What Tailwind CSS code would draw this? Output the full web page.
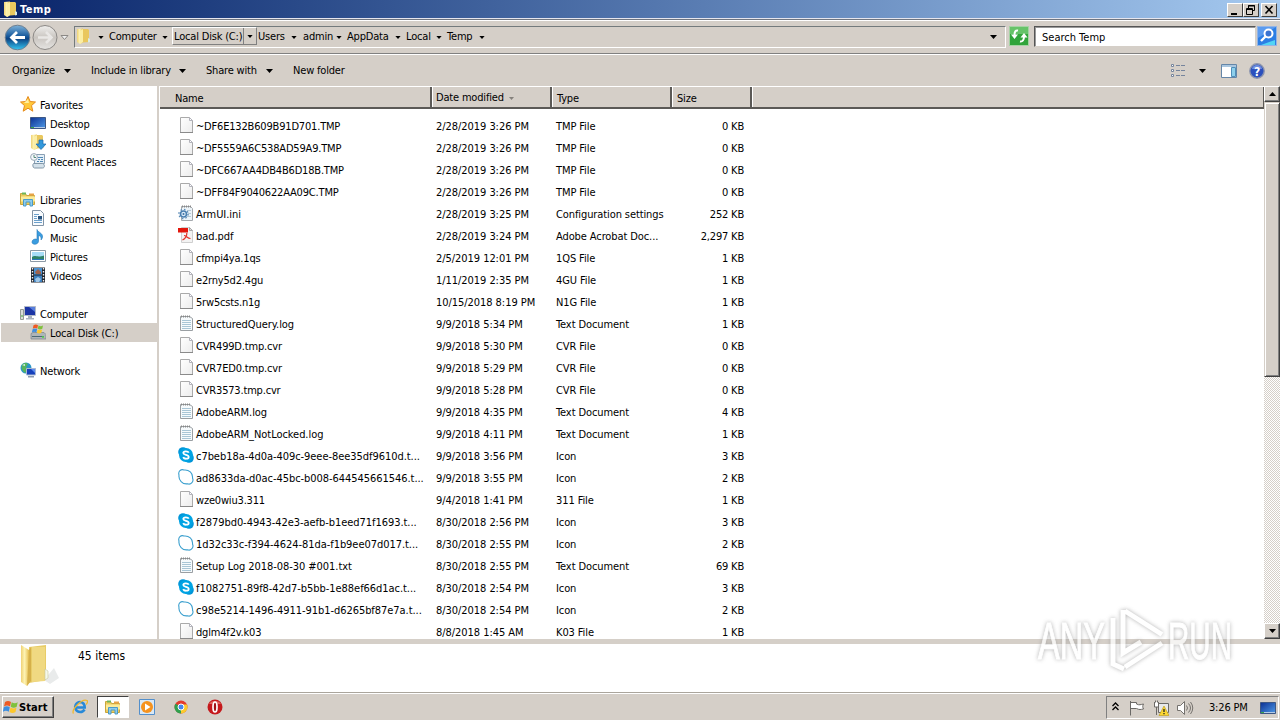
<!DOCTYPE html>
<html lang="en">
<head>
    <meta charset="UTF-8">
    <meta name="viewport" content="width=device-width, initial-scale=1.0">
    <title>Temp</title>
    <script src="https://cdn.jsdelivr.net/npm/@tailwindcss/browser@4"></script>
</head>
<body class="w-[1280px] h-[720px] overflow-hidden bg-[#d5cfc8] text-black text-[11px] leading-[14px] tracking-[-0.18px] font-['DejaVu_Sans_Condensed','DejaVu_Sans',sans-serif]">

    <!-- Shared icons -->
    <svg class="absolute w-0 h-0">
        <defs>
            <linearGradient id="gold" x1="0" x2="1"><stop offset="0" stop-color="#f0d274"/><stop offset=".45" stop-color="#fdf3b4"/><stop offset="1" stop-color="#e6bf50"/></linearGradient>
            <linearGradient id="paper" x1="0" y1="0" x2="1" y2="1"><stop offset="0" stop-color="#fff"/><stop offset="1" stop-color="#ececec"/></linearGradient>
            <linearGradient id="screen" x1="0" y1="0" x2="1" y2="1"><stop offset="0" stop-color="#0b2f92"/><stop offset="1" stop-color="#4f9be8"/></linearGradient>
            <linearGradient id="ball" x1="0" y1="0" x2="0" y2="1"><stop offset="0" stop-color="#7db2da"/><stop offset=".45" stop-color="#17599c"/><stop offset=".55" stop-color="#0c4383"/><stop offset="1" stop-color="#35c6f2"/></linearGradient>
            <linearGradient id="silver" x1="0" y1="0" x2="0" y2="1"><stop offset="0" stop-color="#f0efed"/><stop offset=".5" stop-color="#c9c5c0"/><stop offset="1" stop-color="#e6e4e2"/></linearGradient>
        </defs>
        <symbol id="folder" viewBox="0 0 16 16"><path d="M2 1l6-.5v14L5 16l-3-2z" fill="url(#gold)"/><path d="M8 1h5l1 1v12l-6 .5z" fill="#e9c75e"/><path d="M5 3l3-2v13l-3 2z" fill="#fbeea5"/><path d="M13 10l2 1v3l-2 .5z" fill="#dcebe0"/></symbol>
        <symbol id="file" viewBox="0 0 16 16"><path d="M2.500.5h9l3 3v12h-12z" fill="url(#paper)" stroke="#aaa"/><path d="M11.500.5v3h3z" fill="#fff" stroke="#b4b4bc"/><path d="M2 15.500h13" stroke="#8a8a8a"/></symbol>
        <symbol id="log" viewBox="0 0 16 16"><path d="M2.500 1.500h9l3 2v12h-12z" fill="#f6fafc" stroke="#9a9fa3"/><path d="M4 5.500h9M4 7.500h9M4 9.500h9M4 11.500h9M4 13.500h9" stroke="#a9c6d6"/><path d="M3 1.500h10" stroke="#888" stroke-width="2" stroke-dasharray="1 1"/></symbol>
        <symbol id="ini" viewBox="0 0 16 16"><path d="M3.500 1.500h9l2 2v12h-11z" fill="#edf4f9" stroke="#a5a9ad"/><path d="M4 1.500h9" stroke="#888" stroke-width="2" stroke-dasharray="1 1"/><path d="M9 5.500h4M10 8.500h3M9 11.500h4" stroke="#b5c8d6"/><circle cx="5.500" cy="9" r="3" fill="#dcecf8" stroke="#4b7fb0" stroke-width="1.600"/><circle cx="5.500" cy="9" r="4.600" fill="none" stroke="#5d8db8" stroke-width="1.400" stroke-dasharray="1.500 2.100"/><circle cx="5.500" cy="9" r="1" fill="#4272a1"/></symbol>
        <symbol id="pdf" viewBox="0 0 16 16"><path d="M3.500.5h8l3 3v12h-11z" fill="#f3f3f3" stroke="#cfcfcf"/><path d="M11.500.5v3h3z" fill="#ddd" stroke="#aaa"/><path d="M0 1h10v4.500H0z" fill="#e3170c"/><path d="M4.500 13c3-1.500 4.500-4 4.300-7M6 8.500c2 0 3.500 3 6.500 3" fill="none" stroke="#e23228" stroke-width="1.200"/></symbol>
        <symbol id="skype" viewBox="0 0 16 16"><circle cx="5" cy="5" r="4.800" fill="#0095d8"/><circle cx="11" cy="11" r="4.800" fill="#0095d8"/><circle cx="8" cy="8" r="7" fill="#00a3e3"/><path d="M10.800 5.700C9.800 3.800 5.300 3.800 5.300 6c0 2.300 5.400 1.300 5.400 3.900 0 2.400-4.700 2.400-5.500.2" fill="none" stroke="#fff" stroke-width="1.800"/></symbol>
        <symbol id="skypeo" viewBox="0 0 16 16"><path d="M1 6C-.2 2.500 3-.3 6 1c5-.5 9 3 8.500 8 1.700 3.500-1.500 7-5 5.800C4.500 15.500.3 11 1 6z" fill="#fff" stroke="#3a9fce" stroke-width="1.100"/></symbol>
        <symbol id="star" viewBox="0 0 16 16"><path d="M8 .5l2.200 5 5.300.5-4 3.600 1.300 5.600L8 12.200l-4.800 3 1.300-5.600L.5 6l5.300-.5z" fill="#ffc83a" stroke="#e58a1c"/><path d="M8 3l1 4-5 0z" fill="#fff0a0"/></symbol>
        <symbol id="desktop" viewBox="0 0 16 16"><path d="M.5 2.500h15v11H.5z" fill="url(#screen)" stroke="#3d5784"/><path d="M1 12.500h14" stroke="#b5cbe6"/><path d="M1 12.500h3" stroke="#3ba94a"/></symbol>
        <symbol id="downloads" viewBox="0 0 16 16"><use href="#folder" x="-1" width="16" height="16"/><path d="M9 6h4v4h3l-5 5.500L6 10h3z" fill="#3298dc" stroke="#1b69ab" stroke-width=".7"/></symbol>
        <symbol id="recent" viewBox="0 0 16 16"><path d="M4.500 1.500h10v9h-10z" fill="#e5f0f8" stroke="#8aa0b4"/><path d="M3.500 10.500h9c2 0 3 4.500 0 4.500h-8c-2 0-2-4-1-4.500z" fill="#d4e1ea" stroke="#8297a8"/><path d="M8 4.500h5M8 6.500h2M11 6.500h2M7 8.500h2M10 8.500h3" stroke="#5289b6"/><circle cx="4" cy="4" r="3.400" fill="#f5f8fb" stroke="#9aa8b5"/><path d="M4 2v2.500h2" fill="none" stroke="#587"/></symbol>
        <symbol id="lib" viewBox="0 0 16 16"><path d="M.5 2.500h5l1 2h8v9H.5z" fill="#edcb5c" stroke="#c9a63c"/><path d="M2 1.500h4v2H2z" fill="#6cb55c"/><path d="M9 2.500h5v2H9z" fill="#e8a345"/><path d="M1 5.500h14v5H1z" fill="#fbeb9a"/><path d="M3.500 15V8.500h9V15H10v-4H6v4z" fill="#8ecbec" stroke="#4b9bc8"/></symbol>
        <symbol id="doc" viewBox="0 0 16 16"><path d="M2.500.5h8l3 3v12h-11z" fill="#f8fbfe" stroke="#8294a6"/><path d="M4 4.500h5M4 6.500h3M4 8.500h3M4 10.500h8M4 12.500h8" stroke="#6ca0cc"/><path d="M8 6h4v3.500H8z" fill="#27537f"/></symbol>
        <symbol id="music" viewBox="0 0 16 16"><path d="M7 .5c1 3 6 3.500 5.500 7.500-.2 1.500-1 2.500-1.500 3 .5-3-.5-4-2.500-4.500V12c0 4-6.500 4.300-6.500 1 0-2.500 3-3.500 5-2.700z" fill="#3a9de0" stroke="#2478ba" stroke-width=".6"/></symbol>
        <symbol id="pic" viewBox="0 0 16 16"><path d="M.5 2.500h15v11H.5z" fill="#fff" stroke="#8d9aa6"/><path d="M2 4h12v8H2z" fill="#a7dcf6"/><path d="M2 9c3-2.500 5 1 12-1.500V12H2z" fill="#2f8268"/><path d="M2 11h12v1H2z" fill="#2b76bd"/></symbol>
        <symbol id="video" viewBox="0 0 16 16"><path d="M1 .5h14v15H1z" fill="#20242c"/><path d="M4 1h8v6.500H4z" fill="#4b94d4"/><path d="M4 8.500h8V15H4z" fill="#3c7fbe"/><path d="M5 5l3-3 3 3v2H6z" fill="#a0634d"/><path d="M5 12l3-2 3 2-2 3H6z" fill="#9fc7e8"/><path d="M2.500 1v14M13.500 1v14" stroke="#f2f2f2" stroke-width="1.400" stroke-dasharray="1.500 1.500"/></symbol>
        <symbol id="pc" viewBox="0 0 16 16"><path d="M.5 4.500h3v10h-3z" fill="#d9dcd8" stroke="#949b95"/><path d="M1 11h2" stroke="#45ad3b"/><path d="M4.500 1.500h11v9h-11z" fill="#1b35a5" stroke="#b3bac8"/><path d="M9 2h6v5z" fill="#577ede"/><path d="M8 11h4v2h2v1.500H6V13h2z" fill="#a9b2bf"/></symbol>
        <symbol id="flag" viewBox="0 0 16 16"><path d="M2 3c2-1.500 4-1.500 6 0L7 7.500c-2-1.300-4-1.300-6 0z" fill="#ee5a24"/><path d="M8.700 3.200c2 1.300 4 1.300 6 0l-1 4.500c-2 1.300-4 1.300-6 0z" fill="#7fc13c"/><path d="M.8 8.300c2-1.300 4-1.300 6 0l-1 4.500c-2-1.300-4-1.300-6 0z" fill="#3d8ee0"/><path d="M7.500 8.500c2 1.300 4 1.300 6 0l-1 4.500c-2 1.300-4 1.300-6 0z" fill="#fcc72c"/></symbol>
        <symbol id="disk" viewBox="0 0 16 16"><path d="M1 9.500l2-1h11l2 2V15H1z" fill="#aeb5b8" stroke="#788289" stroke-width=".7"/><path d="M2 12.500h12" stroke="#4d6873"/><path d="M12 13h2" stroke="#52d64a" stroke-width="1.500"/><use href="#flag" x="2" y="-1" width="12" height="12"/></symbol>
        <symbol id="net" viewBox="0 0 16 16"><circle cx="6" cy="6" r="5.500" fill="#2b96c9"/><path d="M2 3c2-3 5-2 6-1L6 5l2 2-3 4C2 9 1 6 2 3z" fill="#57b45e"/><path d="M2 3l3-1v2z" fill="#d6f2ef"/><path d="M6.500 6.500h9v6.500h-9z" fill="#1640bb" stroke="#aab8d2"/><path d="M11 7h4v4z" fill="#5b8cf0"/><path d="M8 14h6v1.500H8z" fill="#8c9bb0"/></symbol>
        <symbol id="down" viewBox="0 0 7 4"><path d="M0 0h7L3.500 4z"/></symbol>
    </svg>

    <div class="flex flex-col h-full">
        <!-- Title bar -->
        <header class="h-[18px] shrink-0 flex items-center pl-[2px] pr-[3px] bg-linear-to-r from-[#0a246a] to-[#a6caf0]">
            <svg class="w-4 h-4"><use href="#folder"/></svg>
            <span class="ml-[2px] mt-px text-white font-bold tracking-[0.5px]">Temp</span>
            <div class="ml-auto flex text-black pt-px">
                <div class="w-4 h-[14px] bg-[#d5cfc8] border border-t-white border-l-white border-b-[#404040] border-r-[#404040]"><svg class="w-[14px] h-3"><path d="M3 9h6v2H3z"/></svg></div>
                <div class="w-4 h-[14px] bg-[#d5cfc8] border border-t-white border-l-white border-b-[#404040] border-r-[#404040]"><svg class="w-[14px] h-3" fill="none" stroke="#000"><path d="M4.500 4V1.500h6v5H9M4 2h7M2.500 4.500h6v6h-6zM2 5.500h7"/></svg></div>
                <div class="ml-[2px] w-4 h-[14px] bg-[#d5cfc8] border border-t-white border-l-white border-b-[#404040] border-r-[#404040]"><svg class="w-[14px] h-3" stroke="#000" stroke-width="1.600"><path d="M3.500 2l7 7.500M10.500 2l-7 7.500"/></svg></div>
            </div>
        </header>

        <!-- Address bar -->
        <div class="h-[37px] shrink-0 flex items-start border-t border-t-[#e6e6ee] border-b border-b-white">
            <div class="w-full h-[35px] flex items-start border-t border-t-[#6f7580] border-b border-b-[#808080] pl-1 pr-[2px] shadow-[inset_0_1px_0_#fff]">
                <svg class="w-[68px] h-[32px] mt-px">
                    <circle cx="13.500" cy="16.500" r="12.300" fill="url(#ball)" stroke="#6e7f90"/>
                    <path d="M21 16.500H8M13 11l-5.500 5.500L13 22" fill="none" stroke="#fff" stroke-width="2.800"/>
                    <circle cx="41" cy="16.500" r="12" fill="url(#silver)" stroke="#8b8885"/>
                    <path d="M34 16.500h13M42 11l5.500 5.500L42 22" fill="none" stroke="#e9e7e5" stroke-width="2.600"/>
                    <path d="M57 14.500h7l-3.500 4z" fill="#eee" stroke="#8b8885"/>
                </svg>
                <div class="mt-[6px] ml-[2px] w-[932px] h-[22px] flex items-center border border-t-[#737a7c] border-l-[#737a7c] border-b-white border-r-white">
                    <svg class="w-4 h-4 -mt-[2px]"><use href="#folder"/></svg>
                    <svg class="w-[6px] h-[3px] ml-[7px] mr-[5px]"><use href="#down"/></svg>
                    <span class="w-[53px] whitespace-nowrap">Computer</span>
                    <svg class="w-[6px] h-[3px]"><use href="#down"/></svg>
                    <div class="ml-[4px] w-[85px] h-[18px] -mt-[2px] flex items-center border border-t-white border-l-white border-b-[#808080] border-r-[#808080]">
                        <span class="w-[71px] h-full pl-px pt-[2px] border-r border-r-[#808080] whitespace-nowrap">Local Disk (C:)</span>
                        <svg class="w-[6px] h-[3px] ml-[3px] mt-px"><use href="#down"/></svg>
                    </div>
                    <span class="ml-px w-[33px]">Users</span>
                    <svg class="w-[6px] h-[3px] mr-[6px]"><use href="#down"/></svg>
                    <span class="w-[33px]">admin</span>
                    <svg class="w-[6px] h-[3px] mr-[5px]"><use href="#down"/></svg>
                    <span class="w-[48px]">AppData</span>
                    <svg class="w-[6px] h-[3px] mr-[5px]"><use href="#down"/></svg>
                    <span class="w-[30px]">Local</span>
                    <svg class="w-[6px] h-[3px] mr-[5px]"><use href="#down"/></svg>
                    <span class="w-[32px]">Temp</span>
                    <svg class="w-[6px] h-[3px]"><use href="#down"/></svg>
                    <svg class="w-[7px] h-[4px] ml-auto mr-[8px]"><use href="#down"/></svg>
                </div>
                <svg class="w-[20px] h-[20px] mt-[6px] ml-[3px]">
                    <rect x=".5" y=".5" width="19" height="19" fill="#31a43b" stroke="#a5d3a4"/>
                    <path d="M1 1h18v7H1z" fill="#66c369"/>
                    <path d="M9 4.500C6.500 4 5.500 6 5.500 9M11 15.500c2.500.5 4-1.500 4-5" fill="none" stroke="#fff" stroke-width="2"/>
                    <path d="M2 8.500h7L5.500 13zM11.500 11.500h7L15 7z" fill="#fff"/>
                </svg>
                <div class="mt-[6px] ml-[5px] w-[222px] h-[21px] bg-white border border-t-[#555] border-l-[#555] border-r-[#d5cfc8] border-b-[#d5cfc8] shadow-[inset_1px_1px_0_#999] pl-[7px] pt-[4px] tracking-[0px]">Search Temp</div>
                <svg class="w-[20px] h-[21px] mt-[6px] ml-px">
                    <rect x=".5" y=".5" width="19" height="19" fill="#2c7ee4" stroke="#93b4e4"/>
                    <path d="M1 1h18L1 12z" fill="#5b9bef"/><path d="M4 19l14-5v5z" fill="#52d4f4"/>
                    <circle cx="11.500" cy="7.500" r="4" fill="#3b74d2" stroke="#fff" stroke-width="2"/><path d="M8.500 10.500L4 15" stroke="#fff" stroke-width="2.400"/>
                </svg>
            </div>
        </div>

        <!-- Command bar -->
        <div class="h-[31px] shrink-0 flex items-center pl-3 pr-[15px]">
            <span class="w-[52px]">Organize</span>
            <svg class="w-[7px] h-[4px]"><use href="#down"/></svg>
            <span class="ml-5 w-[88px] whitespace-nowrap">Include in library</span>
            <svg class="w-[7px] h-[4px]"><use href="#down"/></svg>
            <span class="ml-5 w-[60px] whitespace-nowrap">Share with</span>
            <svg class="w-[7px] h-[4px]"><use href="#down"/></svg>
            <span class="ml-5">New folder</span>
            <svg class="w-4 h-[14px] ml-auto" stroke="#75849c" fill="#fff"><path d="M1.500.5h2v2h-2zM1.500 5.500h2v2h-2zM1.500 10.500h2v2h-2z"/><path d="M6 1.500h4M11 1.500h4M6 6.500h4M11 6.500h4M6 11.500h4M11 11.500h4"/></svg>
            <svg class="w-[7px] h-[4px] ml-[13px]"><use href="#down"/></svg>
            <svg class="w-4 h-[14px] ml-[15px]"><path d="M.5.5h15v13H.5z" fill="#fff" stroke="#6486a8"/><path d="M1 1h14v2H1z" fill="#a9c6df"/><path d="M10.500 3.500h4v9h-4z" fill="#8ed0ec" stroke="#4f8eb9"/></svg>
            <svg class="w-4 h-4 ml-[12px]"><circle cx="8" cy="8" r="7.200" fill="#2b50bd" stroke="#8b94ae" stroke-width="1.400"/><path d="M3 6a5 4 0 0110 0z" fill="#6d8de0"/><text x="8" y="12.500" text-anchor="middle" font-size="12" font-weight="bold" fill="#fff">?</text></svg>
        </div>

        <!-- Explorer panes -->
        <div class="h-[553px] shrink-0 flex">
            <nav id="tree" class="w-[157px] bg-white pt-[9px] pl-px"></nav>
            <div class="w-[3px] bg-[#d5cfc8] border-r border-r-white"></div>

            <main class="flex-1 bg-white overflow-hidden">
                <div class="h-[23px] flex bg-[#d5cfc8] border-t border-t-white border-b-2 border-b-[#5b5956] leading-[22px]">
                    <div class="w-[272px] pl-[15px] pt-px border-r-2 border-r-[#5b5956]">Name</div>
                    <div class="w-[120px] pl-[3px] pt-[2px] border-l border-l-white border-r-2 border-r-[#5b5956] flex items-center">Date modified<svg class="w-[5px] h-[3px] ml-[5px] fill-[#85817c]"><use href="#down"/></svg></div>
                    <div class="w-[120px] pl-[4px] pt-px border-l border-l-white border-r-2 border-r-[#5b5956]">Type</div>
                    <div class="w-[80px] pl-[4px] pt-px border-l border-l-white border-r-2 border-r-[#5b5956]">Size</div>
                    <div class="flex-1 border-l border-l-white border-r border-r-[#5b5956]"></div>
                </div>
                <div id="files" class="pt-[6px]"></div>
            </main>

            <!-- Scroll bar -->
            <div class="w-4 flex flex-col bg-[repeating-conic-gradient(#fff_0_25%,#d5cfc8_0_50%)] bg-size-[2px_2px]">
                <div class="h-4 bg-[#d5cfc8] border border-t-white border-l-white border-b-[#404040] border-r-[#404040] shadow-[inset_-1px_-1px_0_#808080] flex items-center justify-center"><svg class="w-[7px] h-[4px] rotate-180"><use href="#down"/></svg></div>
                <div class="h-[275px] bg-[#d5cfc8] border border-t-[#d5cfc8] border-l-[#d5cfc8] border-b-[#404040] border-r-[#404040] shadow-[inset_1px_1px_0_#fff,inset_-1px_-1px_0_#808080]"></div>
                <div class="mt-auto h-4 bg-[#d5cfc8] border border-t-white border-l-white border-b-[#404040] border-r-[#404040] shadow-[inset_-1px_-1px_0_#808080] flex items-center justify-center"><svg class="w-[7px] h-[4px]"><use href="#down"/></svg></div>
            </div>
        </div>

        <!-- Details pane -->
        <div class="mt-[5px] h-[48px] shrink-0 bg-white flex">
            <svg class="ml-[18px] w-[42px] h-[46px]">
                <path d="M26 36l10-12 5 10-9 6z" fill="#e9ebeb"/>
                <path d="M11 3l17-2v35l-17 3z" fill="#e8cc67"/><path d="M14 3h13v34l-13 1z" fill="#f0d982"/>
                <path d="M3 1l8 5v32l-2 4-6-4z" fill="url(#gold)"/><path d="M11 6l2-3v34l-4 5z" fill="#d5b04a"/>
                <path d="M27 25l3 2v7l-3 2z" fill="#f5f9ec" stroke="#c8c8a0" stroke-width=".6"/>
            </svg>
            <span class="ml-[18px] mt-[5px] text-[12px] tracking-[0px]">45 items</span>
        </div>

        <!-- Taskbar -->
        <footer class="flex-1 border-t border-t-[#aaa59c] shadow-[inset_0_1px_0_#fff] flex items-start pl-[2px] pr-px">
            <div class="mt-[3px] w-[52px] h-[22px] border border-t-white border-l-white border-b-[#404040] border-r-[#404040] shadow-[inset_-1px_-1px_0_#808080] flex items-center">
                <svg class="w-4 h-4"><use href="#flag"/></svg><b class="mt-px tracking-[0.1px]">Start</b>
            </div>
            <svg class="w-4 h-4 mt-[6px] ml-[18px]" fill="none"><path d="M12.500 10.500A5 5 0 118 3c3 0 4.800 2.500 4.700 5.500H4" stroke="#2789d8" stroke-width="2.600"/><path d="M1.500 14.500C-1 11 10-1 15 1.500c1 1 0 3-1 4" stroke="#efb82f" stroke-width="1.300"/></svg>
            <div class="ml-[9px] mt-[3px] w-8 h-[22px] bg-white border border-t-[#404040] border-l-[#404040] border-b-white border-r-white flex items-center justify-center"><svg class="w-4 h-4"><use href="#lib"/></svg></div>
            <svg class="w-4 h-4 mt-[6px] ml-[10px]"><path d="M.5.5h15v15H.5z" fill="#d9e8f5" stroke="#538fcb"/><circle cx="8" cy="8" r="6" fill="#f5921e"/><path d="M6 4.500l5.500 3.500L6 11.500z" fill="#fff"/></svg>
            <svg class="w-4 h-4 mt-[6px] ml-[18px]"><circle cx="8" cy="8" r="6.500" fill="#e33b2e"/><path d="M2.400 4.700A6.500 6.500 0 008 14.500l3-5z" fill="#2fa04e"/><path d="M8 14.500A6.500 6.500 0 0014 5.500H8z" fill="#fbcb2d"/><circle cx="8" cy="8" r="3" fill="#4587ee" stroke="#fff"/></svg>
            <svg class="w-4 h-4 mt-[6px] ml-[18px]"><circle cx="8" cy="8" r="7.500" fill="#c5191c"/><path d="M2 5a6.500 5 0 0112 0z" fill="#e0625c"/><ellipse cx="8" cy="8" rx="2" ry="5" fill="#a01215" stroke="#fff" stroke-width="1.700"/></svg>

            <div class="ml-auto mt-[3px] w-[173px] h-[23px] border border-t-[#808080] border-l-[#808080] border-b-white border-r-white flex items-center">
                <svg class="w-[7px] h-[9px] ml-[5px] -mt-[2px]" fill="none" stroke="#000" stroke-width="1.300"><path d="M.5 4l3-3 3 3M.5 8l3-3 3 3"/></svg>
                <svg class="w-4 h-4 ml-[10px]" fill="#fff" stroke="#6b6966"><path d="M1.500 1v14.500M1.500 2.500h6v1.500c3 1.500 4 .5 7 0-1 2-1 3 0 5-3 .5-4 1-7-.5H1.500"/></svg>
                <svg class="w-4 h-4 ml-[8px]"><path d="M5.500 3.500h10v9h-10z" fill="#e7e8ea" stroke="#6b6966"/><path d="M1.500 2v5h4V2M3.500 7v8M2.500.500v2M4.500.500v2" fill="#fff" stroke="#6b6966"/><path d="M11 6l5 9.500H6z" fill="#fcd732" stroke="#b99712" stroke-width=".6"/><path d="M11 9v3M11 13v1.200" stroke="#222" stroke-width="1.300"/></svg>
                <svg class="w-[18px] h-4 ml-[7px]" fill="none" stroke="#74716d"><path d="M1.500 5.500h3l4-4v13l-4-4h-3z" fill="#fff"/><path d="M10.500 5.500q2 2.500 0 5M12.500 3.500q4 4.500 0 9M14.500 2q4.500 6 0 12"/></svg>
                <span class="ml-[15px] w-[43px] whitespace-nowrap">3:26 PM</span>
                <svg class="w-4 h-4 ml-[8px]"><use href="#desktop"/></svg>
            </div>
        </footer>
    </div>

    <!-- Watermark -->
    <svg class="absolute left-[1034px] top-[600px] w-[216px] h-[80px] drop-shadow-[0_0_2px_#999] tracking-[0px]" opacity=".75" fill="#fff" stroke="#fff" font-family="Liberation Sans Narrow, Liberation Sans" font-size="51">
        <text x="4" y="59" textLength="67" lengthAdjust="spacingAndGlyphs">ANY</text>
        <text x="134" y="59" textLength="64" lengthAdjust="spacingAndGlyphs">RUN</text>
        <path d="M91 11l37 23.500M89 10v43l18-11M128 43L91 67M79 18v46l11 5" fill="none" stroke-width="5"/>
    </svg>

    <script>
        // [icon, label, is child]; null leaves an empty line
        const tree = [
            ['star', 'Favorites'], ['desktop', 'Desktop', 1], ['downloads', 'Downloads', 1], ['recent', 'Recent Places', 1], null,
            ['lib', 'Libraries'], ['doc', 'Documents', 1], ['music', 'Music', 1], ['pic', 'Pictures', 1], ['video', 'Videos', 1], null,
            ['pc', 'Computer'], ['disk', 'Local Disk (C:)', 1], null,
            ['net', 'Network']
        ];

        const files = [
            ['file', '~DF6E132B609B91D701.TMP', '2/28/2019 3:26 PM', 'TMP File', '0 KB'],
            ['file', '~DF5559A6C538AD59A9.TMP', '2/28/2019 3:26 PM', 'TMP File', '0 KB'],
            ['file', '~DFC667AA4DB4B6D18B.TMP', '2/28/2019 3:26 PM', 'TMP File', '0 KB'],
            ['file', '~DFF84F9040622AA09C.TMP', '2/28/2019 3:26 PM', 'TMP File', '0 KB'],
            ['ini', 'ArmUI.ini', '2/28/2019 3:25 PM', 'Configuration settings', '252 KB'],
            ['pdf', 'bad.pdf', '2/28/2019 3:24 PM', 'Adobe Acrobat Doc...', '2,297 KB'],
            ['file', 'cfmpi4ya.1qs', '2/5/2019 12:01 PM', '1QS File', '1 KB'],
            ['file', 'e2rny5d2.4gu', '1/11/2019 2:35 PM', '4GU File', '1 KB'],
            ['file', '5rw5csts.n1g', '10/15/2018 8:19 PM', 'N1G File', '1 KB'],
            ['log', 'StructuredQuery.log', '9/9/2018 5:34 PM', 'Text Document', '1 KB'],
            ['file', 'CVR499D.tmp.cvr', '9/9/2018 5:30 PM', 'CVR File', '0 KB'],
            ['file', 'CVR7ED0.tmp.cvr', '9/9/2018 5:29 PM', 'CVR File', '0 KB'],
            ['file', 'CVR3573.tmp.cvr', '9/9/2018 5:28 PM', 'CVR File', '0 KB'],
            ['log', 'AdobeARM.log', '9/9/2018 4:35 PM', 'Text Document', '4 KB'],
            ['log', 'AdobeARM_NotLocked.log', '9/9/2018 4:11 PM', 'Text Document', '1 KB'],
            ['skype', 'c7beb18a-4d0a-409c-9eee-8ee35df9610d.t...', '9/9/2018 3:56 PM', 'Icon', '3 KB'],
            ['skypeo', 'ad8633da-d0ac-45bc-b008-644545661546.t...', '9/9/2018 3:55 PM', 'Icon', '2 KB'],
            ['file', 'wze0wiu3.311', '9/4/2018 1:41 PM', '311 File', '1 KB'],
            ['skype', 'f2879bd0-4943-42e3-aefb-b1eed71f1693.t...', '8/30/2018 2:56 PM', 'Icon', '3 KB'],
            ['skypeo', '1d32c33c-f394-4624-81da-f1b9ee07d017.t...', '8/30/2018 2:55 PM', 'Icon', '2 KB'],
            ['log', 'Setup Log 2018-08-30 #001.txt', '8/30/2018 2:55 PM', 'Text Document', '69 KB'],
            ['skype', 'f1082751-89f8-42d7-b5bb-1e88ef66d1ac.t...', '8/30/2018 2:54 PM', 'Icon', '3 KB'],
            ['skypeo', 'c98e5214-1496-4911-91b1-d6265bf87e7a.t...', '8/30/2018 2:54 PM', 'Icon', '2 KB'],
            ['file', 'dglm4f2v.k03', '8/8/2018 1:45 AM', 'K03 File', '1 KB']
        ];

        document.getElementById('tree').innerHTML = tree.map(item => item ? `
            <div class="h-[19px] flex items-center gap-[4px] ${item[2] ? 'pl-[29px]' : 'pl-[19px]'} ${item[0] === 'disk' ? 'bg-[#d5cfc8]' : ''}">
                <svg class="w-4 h-4 -mt-px"><use href="#${item[0]}"/></svg><span class="mt-[2px]">${item[1]}</span>
            </div>` : '<div class="h-[19px]"></div>').join('');

        document.getElementById('files').innerHTML = files.map(([icon, name, date, type, size]) => `
            <div class="h-[22px] flex items-center pl-[18px] whitespace-nowrap">
                <svg class="w-4 h-4 mr-[2px] -mt-[2px]"><use href="#${icon}"/></svg>
                <span class="mt-[2px] w-[240px] ${icon === 'file' ? 'tracking-[-0.18px]' : 'tracking-[-0.05px]'}">${name}</span>
                <span class="mt-[2px] w-[120px] tracking-[-0.05px]">${date}</span>
                <span class="mt-[2px] w-[120px] tracking-[-0.1px]">${type}</span>
                <span class="mt-[2px] w-[68px] text-right">${size}</span>
            </div>`).join('');
    </script>
</body>
</html>
